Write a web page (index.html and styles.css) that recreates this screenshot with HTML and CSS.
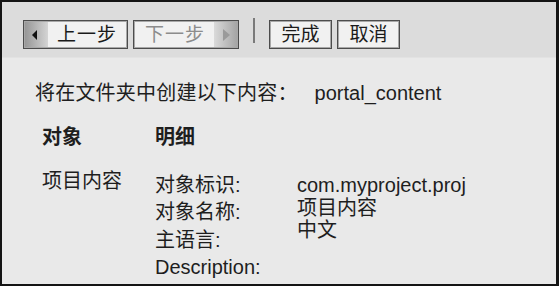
FILE: index.html
```html
<!DOCTYPE html>
<html lang="zh">
<head>
<meta charset="utf-8">
<link rel="stylesheet" href="styles.css">
</head>
<body>
<div class="frame">
  <div class="toolbar">
    <div class="btn nav prev">
      <span class="arrow-box left"><span class="tri tri-left"></span></span>
      <span class="label">上一步</span>
    </div>
    <div class="btn nav next disabled">
      <span class="label">下一步</span>
      <span class="arrow-box right"><span class="tri tri-right"></span></span>
    </div>
    <span class="sep"></span>
    <div class="btn plain">完成</div>
    <div class="btn plain">取消</div>
  </div>
  <div class="content">
    <p class="intro"><span class="intro-cn">将在文件夹中创建以下内容：</span><span class="intro-val">portal_content</span></p>
    <div class="table">
      <div class="head">对象</div>
      <div class="head">明细</div>
      <div class="spacer"></div>
      <div class="obj">项目内容</div>
      <div class="labels">
        <div>对象标识:</div>
        <div>对象名称:</div>
        <div>主语言:</div>
        <div>Description:</div>
      </div>
      <div class="values">
        <div>com.myproject.proj</div>
        <div>项目内容</div>
        <div>中文</div>
      </div>
    </div>
  </div>
</div>
</body>
</html>
```

FILE: styles.css
```css
html, body {
  margin: 0;
  padding: 0;
}
body {
  width: 559px;
  height: 286px;
  overflow: hidden;
  font-family: "Liberation Sans", "Noto Sans CJK SC", sans-serif;
  color: #1e1e1e;
  font-size: 20px;
}
.frame {
  box-sizing: border-box;
  width: 559px;
  height: 286px;
  border-style: solid;
  border-color: #141414;
  border-width: 2px 3px 2px 2px;
  background: #e9e9e9;
  display: flex;
  flex-direction: column;
  overflow: hidden;
}
.toolbar {
  height: 56px;
  box-sizing: border-box;
  background: #dcdcdc;
  display: flex;
  align-items: flex-start;
  padding: 18px 0 0 21px;
  border-bottom: 1px solid #e2e2e2;
}
.btn {
  box-sizing: border-box;
  height: 29px;
  border: 1px solid #4c4c4c;
  box-shadow: inset 0 0 0 1px #a8a8a8;
  background: #f1f1f1;
  display: flex;
  align-items: center;
  font-size: 19px;
  line-height: 27px;
  color: #1a1a1a;
}
.nav {
  width: 105px;
}
.next {
  margin-left: 5px;
  width: 106px;
}
.prev .label {
  padding-left: 8px;
  letter-spacing: 1px;
}
.next .label {
  padding-left: 11px;
  flex: 1;
  letter-spacing: 1px;
}
.disabled .label {
  color: #8c8c8c;
}
.arrow-box {
  align-self: stretch;
  width: 23px;
  display: flex;
  align-items: center;
  justify-content: center;
  margin: 1px;
}
.arrow-box.left {
  background: linear-gradient(to right, #979797, #d4d4d4);
}
.arrow-box.right {
  background: linear-gradient(to right, #dadada, #a5a5a5);
}
.tri {
  width: 0;
  height: 0;
  border-top: 5px solid transparent;
  border-bottom: 5px solid transparent;
}
.tri-left {
  border-right: 5px solid #111;
  margin-right: 4px;
}
.tri-right {
  border-top-width: 6px;
  border-bottom-width: 6px;
  border-left: 7px solid #9a9a9a;
  margin-left: 2px;
}
.sep {
  width: 2px;
  height: 25px;
  background: #7a7a7a;
  margin: -2px 14px 0 14px;
}
.plain {
  width: 63px;
  justify-content: center;
  margin-right: 5px;
}
.content {
  flex: 1;
  padding: 0 0 0 33px;
}
.intro {
  margin: 23px 0 0 0;
  line-height: 24px;
  font-size: 20px;
}
.intro-cn {
  letter-spacing: 0.2px;
}
.intro-val {
  margin-left: 17px;
}
.table {
  margin: 20px 0 0 7px;
  display: grid;
  grid-template-columns: 113px 142px auto;
  align-items: start;
}
.head {
  font-weight: bold;
  line-height: 24px;
}
.spacer {
  height: 24px;
}
.obj {
  margin-top: 20px;
  line-height: 24px;
}
.labels {
  margin-top: 23px;
  line-height: 27.4px;
}
.values {
  margin-top: 25px;
  line-height: 22.5px;
}
```
